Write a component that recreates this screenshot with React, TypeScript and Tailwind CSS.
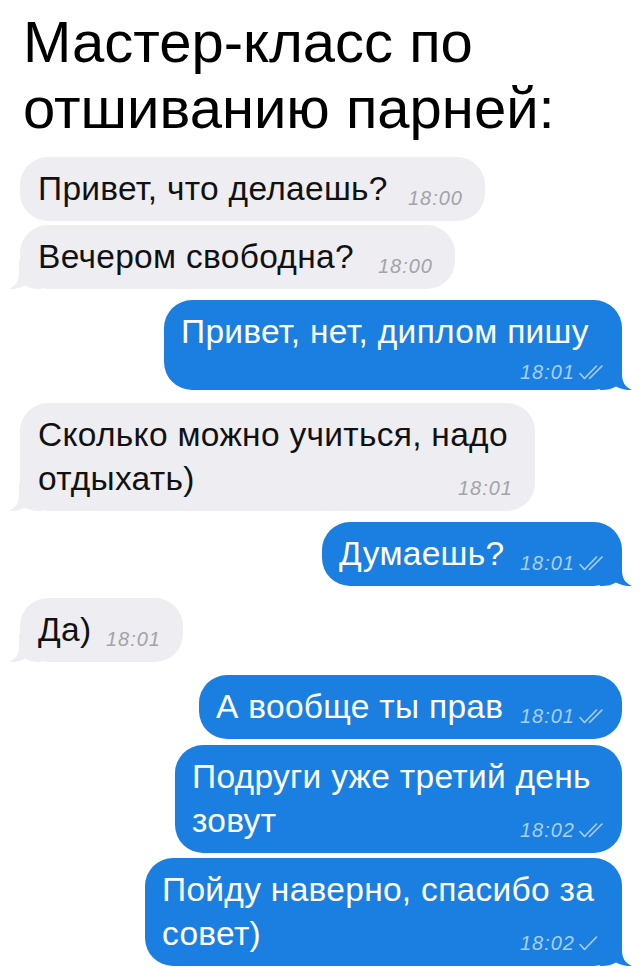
import React from "react";

type Side = "in" | "out";

const BLUE = "#1b7fe1";
const GRAY = "#eeeef2";

const Checks = ({ double = true }: { double?: boolean }) => (
	<svg
		width="30"
		height="17"
		viewBox="0 0 30 17"
		fill="none"
		stroke="#a9d0f6"
		strokeWidth="1.6"
		strokeLinecap="round"
		strokeLinejoin="round"
		className="ml-[3px] shrink-0"
	>
		<path d="M2 9.5L6.5 14.5L18.5 2" />
		{double && <path d="M11.5 14.5L24 2" />}
	</svg>
);

const Time = ({
	t,
	side,
	checks,
}: {
	t: string;
	side: Side;
	checks?: 1 | 2;
}) => (
	<span
		className={`flex items-center shrink-0 translate-y-[5px] text-[20px] leading-[26px] italic tracking-[1px] ${
			side === "out" ? "text-[#a9d0f6]" : "text-[#a3a3a8]"
		}`}
	>
		{t}
		{checks && <Checks double={checks === 2} />}
	</span>
);

const Tail = ({ side }: { side: Side }) =>
	side === "out" ? (
		<svg
			width="32"
			height="28"
			viewBox="0 0 32 28"
			className="absolute bottom-0 -right-[10px]"
		>
			<path
				d="M0 0H22V12C22 20 25 25 32 28C26 28.5 21 27 16 24.5C12 27 7 28 2 28H0Z"
				fill={BLUE}
			/>
		</svg>
	) : (
		<svg
			width="32"
			height="28"
			viewBox="0 0 32 28"
			className="absolute bottom-0 -left-[11px]"
		>
			<path
				d="M32 0H10V12C10 20 7 25 0 28C6 28.5 11 27 16 24.5C20 27 25 28 30 28H32Z"
				fill={GRAY}
			/>
		</svg>
	);

interface BubbleProps {
	side: Side;
	width: number;
	tail?: boolean;
	mt: string;
	children: React.ReactNode;
}

const Bubble: React.FC<BubbleProps> = ({ side, width, tail, mt, children }) => {
	const isOut = side === "out";
	return (
		<div
			className={`flex ${mt} ${
				isOut ? "justify-end pr-[18px]" : "justify-start pl-[20px]"
			}`}
		>
			<div
				style={{ width }}
				className={`relative rounded-[28px] py-[10px] text-[33.5px] leading-[44px] tracking-[0.3px] ${
					isOut
						? "bg-[#1b7fe1] text-white pl-[17px] pr-[14px]"
						: "bg-[#eeeef2] text-[#111] pl-[18px] pr-[22px]"
				}`}
			>
				{tail && <Tail side={side} />}
				<div className="relative">{children}</div>
			</div>
		</div>
	);
};

const Line = ({ children }: { children: React.ReactNode }) => (
	<div className="flex items-baseline justify-between gap-[8px] whitespace-nowrap">
		{children}
	</div>
);

export default function App() {
	return (
		<div
			className="w-[640px] h-[976px] bg-white overflow-hidden"
			style={{ fontFamily: '"Liberation Sans", Arial, sans-serif' }}
		>
			<h1 className="pl-[23px] pt-[9px] text-[58px] leading-[66px] text-black font-normal">
				Мастер-класс по
				<br />
				отшиванию парней:
			</h1>

			<div className="flex flex-col pt-[16px]">
				<Bubble side="in" width={465} mt="mt-0">
					<Line>
						<span>Привет, что делаешь?</span>
						<Time t="18:00" side="in" />
					</Line>
				</Bubble>

				<Bubble side="in" width={435} tail mt="mt-[4px]">
					<Line>
						<span>Вечером свободна?</span>
						<Time t="18:00" side="in" />
					</Line>
				</Bubble>

				<Bubble side="out" width={458} tail mt="mt-[11px]">
					<div className="whitespace-nowrap">Привет, нет, диплом пишу</div>
					<div className="flex justify-end h-[26px]">
						<Time t="18:01" side="out" checks={2} />
					</div>
				</Bubble>

				<Bubble side="in" width={515} tail mt="mt-[13px]">
					<div className="whitespace-nowrap">Сколько можно учиться, надо</div>
					<Line>
						<span>отдыхать)</span>
						<Time t="18:01" side="in" />
					</Line>
				</Bubble>

				<Bubble side="out" width={300} tail mt="mt-[11px]">
					<Line>
						<span>Думаешь?</span>
						<Time t="18:01" side="out" checks={2} />
					</Line>
				</Bubble>

				<Bubble side="in" width={163} tail mt="mt-[12px]">
					<Line>
						<span>Да)</span>
						<Time t="18:01" side="in" />
					</Line>
				</Bubble>

				<Bubble side="out" width={423} mt="mt-[13px]">
					<Line>
						<span>А вообще ты прав</span>
						<Time t="18:01" side="out" checks={2} />
					</Line>
				</Bubble>

				<Bubble side="out" width={447} mt="mt-[6px]">
					<div className="whitespace-nowrap">Подруги уже третий день</div>
					<Line>
						<span>зовут</span>
						<Time t="18:02" side="out" checks={2} />
					</Line>
				</Bubble>

				<Bubble side="out" width={477} tail mt="mt-[5px]">
					<div className="whitespace-nowrap">Пойду наверно, спасибо за</div>
					<Line>
						<span>совет)</span>
						<Time t="18:02" side="out" checks={1} />
					</Line>
				</Bubble>
			</div>
		</div>
	);
}
